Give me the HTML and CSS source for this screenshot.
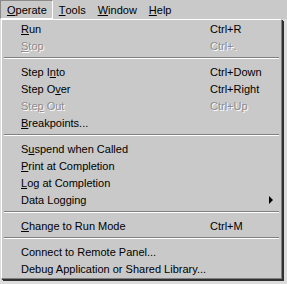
FILE: index.html
```html
<!DOCTYPE html>
<html lang="en">
<head>
    <meta charset="UTF-8">
    <title>Operate Menu</title>
    <link rel="stylesheet" href="styles.css">
</head>
<body>
    <div class="menubar">
        <span class="menu-title open"><u>O</u>perate</span>
        <span class="menu-title"><u>T</u>ools</span>
        <span class="menu-title"><u>W</u>indow</span>
        <span class="menu-title"><u>H</u>elp</span>
    </div>
    <div class="stage">
        <div class="dropdown">
            <div class="item"><span class="label"><u>R</u>un</span><span class="key">Ctrl+R</span></div>
            <div class="item disabled"><span class="label"><u>S</u>top</span><span class="key">Ctrl+.</span></div>
            <div class="sep"></div>
            <div class="item"><span class="label">Step I<u>n</u>to</span><span class="key">Ctrl+Down</span></div>
            <div class="item"><span class="label">Step O<u>v</u>er</span><span class="key">Ctrl+Right</span></div>
            <div class="item disabled"><span class="label">Ste<u>p</u> Out</span><span class="key">Ctrl+Up</span></div>
            <div class="item"><span class="label"><u>B</u>reakpoints...</span></div>
            <div class="sep"></div>
            <div class="item"><span class="label">S<u>u</u>spend when Called</span></div>
            <div class="item"><span class="label"><u>P</u>rint at Completion</span></div>
            <div class="item"><span class="label"><u>L</u>og at Completion</span></div>
            <div class="item"><span class="label">Data Lo<u>g</u>ging</span><span class="arrow"></span></div>
            <div class="sep"></div>
            <div class="item"><span class="label"><u>C</u>hange to Run Mode</span><span class="key">Ctrl+M</span></div>
            <div class="sep"></div>
            <div class="item"><span class="label">Connect to Remote Panel...</span></div>
            <div class="item"><span class="label">Debug Application or Shared Library...</span></div>
        </div>
    </div>
</body>
</html>
```

FILE: styles.css
```css
body {
    margin: 0;
    background: #c9c9c9;
    font-family: Tahoma, "Liberation Sans", sans-serif;
    font-size: 11px;
    color: #000;
    width: 287px;
    height: 284px;
    overflow: hidden;
}

u {
    text-decoration-thickness: 1px;
    text-underline-offset: 1px;
}

.menubar {
    display: flex;
    height: 19px;
    align-items: stretch;
}

.menu-title {
    display: flex;
    align-items: center;
    padding: 0 5px 0 6px;
    border: 1px solid transparent;
}

.menu-title + .menu-title {
    padding-left: 5px;
}

.menu-title.open {
    border-color: #8a8a8a #fff #fff #8a8a8a;
}

.stage {
    background: #dcdcdc;
    height: 265px;
}

.dropdown {
    width: 279px;
    margin-left: 1px;
    background: #c9c9c9;
    border-top: 1px solid #fff;
    border-left: 1px solid #fff;
    border-right: 1px solid #808080;
    border-bottom: 1px solid #808080;
    box-shadow: 1px 1px 0 #303030, 2px 2px 0 #303030;
    padding: 0 0 1px 0;
}

.item {
    display: flex;
    align-items: center;
    height: 17px;
    padding-left: 19px;
}

.label {
    flex: 1;
}

.key {
    width: 71px;
}

.disabled {
    color: #8c8c8c;
    text-shadow: 1px 1px 0 #fff;
}

.arrow {
    width: 0;
    height: 0;
    border-top: 4px solid transparent;
    border-bottom: 4px solid transparent;
    border-left: 4px solid #000;
    margin-right: 8px;
}

.sep {
    height: 0;
    margin: 3px 2px 4px 2px;
    border-top: 1px solid #808080;
    border-bottom: 1px solid #fff;
}
```
